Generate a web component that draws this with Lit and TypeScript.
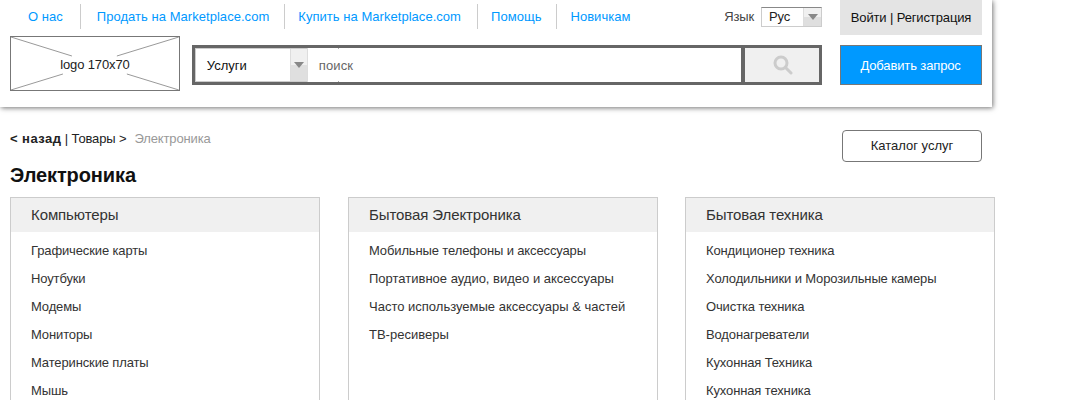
import { LitElement, html, css } from "lit";
import { customElement } from "lit/decorators.js";

const columns = [
  { t: "Компьютеры", items: ["Графические карты", "Ноутбуки", "Модемы", "Мониторы", "Материнские платы", "Мышь"] },
  { t: "Бытовая Электроника", items: ["Мобильные телефоны и аксессуары", "Портативное аудио, видео и аксессуары", "Часто используемые аксессуары & частей", "ТВ-ресиверы"] },
  { t: "Бытовая техника", items: ["Кондиционер техника", "Холодильники и Морозильные камеры", "Очистка техника", "Водонагреватели", "Кухонная Техника", "Кухонная техника"] },
];
const nav = ["О нас", "Продать на Marketplace.com", "Купить на Marketplace.com", "Помощь", "Новичкам"];

@customElement("app-root")
export class AppRoot extends LitElement {
  static styles = css`
    :host { display: block; width: 1072px; height: 400px; overflow: hidden; font-family: "Liberation Sans", Arial, sans-serif; font-size: 13px; letter-spacing: -.13px; color: #222; background: #fff; }
    .header { width: 992px; height: 107px; box-sizing: border-box; box-shadow: 1px 1px 5px rgba(0,0,0,.55); padding: 0 10px; }
    .top { display: flex; height: 35px; }
    .nav { display: flex; align-items: flex-start; padding-top: 4px; flex: 1; }
    .nav a { color: #0099ff; height: 25px; line-height: 25px; padding: 0 13px; border-right: 1px solid #ccc; white-space: nowrap; letter-spacing: .04px; }
    .nav a:first-child { padding: 0 17px 0 18px; }
    .nav a:nth-child(2) { padding: 0 15px 0 16px; }
    .nav a:nth-child(3) { padding: 0 16px 0 13px; }
    .nav a:nth-child(4) { padding: 0 15px 0 13px; }
    .nav a:last-child { border-right: 0; }
    .lang { display: flex; align-items: flex-start; padding-top: 7px; gap: 7px; margin-right: 18px; color: #444; }
    .lang span { line-height: 20px; }
    .sel { display: flex; box-sizing: border-box; width: 61px; height: 20px; border: 1px solid #ccc; border-top-color: #888; color: #222; line-height: 18px; }
    .sel b { font-weight: normal; flex: 1; padding-left: 7px; }
    .arrow { display: flex; align-items: center; justify-content: center; width: 17px; background: linear-gradient(#f0f0f0 50%, #dfdfdf 50%); border-left: 1px solid #ddd; }
    .arrow i { border: 5px solid transparent; border-top: 6px solid #888; border-bottom: 0; }
    .login { width: 142px; height: 35px; line-height: 36px; background: #e4e4e4; text-align: center; color: #111; }
    .row { display: flex; align-items: flex-start; padding-top: 1px; }
    .logo { position: relative; box-sizing: border-box; width: 170px; height: 55px; border: 1px solid #777; display: flex; align-items: center; justify-content: center; padding-top: 1px; }
    .logo svg { position: absolute; inset: 0; width: 100%; height: 100%; }
    .logo span { position: relative; }
    .search { display: flex; box-sizing: border-box; margin: 9px 0 0 12px; width: 631px; height: 40px; border: 3px solid #666; }
    .cat { display: flex; width: 112px; border: 1px solid #ccc; border-right: 0; box-sizing: border-box; color: #111; line-height: 33px; letter-spacing: 0; }
    .cat b { font-weight: normal; flex: 1; padding-left: 11px; }
    .cat .arrow { width: 16px; }
    .input { position: relative; flex: 1; padding-left: 11px; line-height: 36px; color: #666; border-left: 1px solid #ddd; letter-spacing: .1px; }
    .input::before, .input::after { content: ""; position: absolute; left: 30px; width: 1px; height: 1px; background: #aaa; }
    .input::before { top: 0; }
    .input::after { bottom: 0; }
    .go { box-sizing: border-box; width: 78px; background: #f0f0f0; border-left: 4px solid #666; display: flex; align-items: center; justify-content: center; padding-left: 2px; }
    .add { margin: 9px 0 0 18px; width: 142px; height: 40px; box-sizing: border-box; background: #0099ff; border: 1px solid #777; color: #fff; text-align: center; line-height: 39px; padding-right: 1px; }
    .crumbs { display: flex; padding: 23px 10px 0; height: 56px; box-sizing: border-box; align-items: flex-start; }
    .crumbs .path { line-height: 17px; white-space: pre; }
    .crumbs b { letter-spacing: .45px; }
    .crumbs .cur { color: #999; margin-left: 1px; }
    .catalog { margin: 0 80px 0 auto; width: 140px; height: 32px; box-sizing: border-box; border: 1px solid #777; border-radius: 4px; text-align: center; line-height: 30px; letter-spacing: 0; }
    .wrap { padding: 0 10px; }
    h1 { margin: 0; font-size: 20px; line-height: 25px; color: #111; letter-spacing: -.1px; }
    .cols { display: flex; gap: 28px; margin-top: 9px; }
    .col { width: 310px; box-sizing: border-box; border: 1px solid #ccc; height: 300px; }
    .col:nth-child(3) { margin-left: -1px; }
    .col h2 { margin: 0; font-weight: normal; font-size: 15px; letter-spacing: -.1px; background: #f0f0f0; height: 34px; line-height: 34px; padding-left: 20px; color: #333; }
    .col ul { list-style: none; margin: 0; padding: 5px 0 0 20px; }
    .col li { height: 28px; line-height: 28px; color: #333; }
    .col:nth-child(2) li:nth-child(n+2) { letter-spacing: 0; }
  `;

  render() {
    return html`
      <div class="header">
        <div class="top">
          <div class="nav">${nav.map((n) => html`<a>${n}</a>`)}</div>
          <div class="lang"><span>Язык</span><div class="sel"><b>Рус</b><div class="arrow"><i></i></div></div></div>
          <div class="login">Войти | Регистрация</div>
        </div>
        <div class="row">
          <div class="logo">
            <svg viewBox="0 0 168 53"><path d="M0 0L61 19M168 0L106 19M0 53L52 37M168 53L116 37" stroke="#999" stroke-width="1" fill="none"/></svg>
            <span>logo 170x70</span>
          </div>
          <div class="search">
            <div class="cat"><b>Услуги</b><div class="arrow"><i></i></div></div>
            <div class="input">поиск</div>
            <div class="go"><svg width="20" height="20" viewBox="0 0 20 20" fill="none" stroke="#ccc" stroke-width="3"><circle cx="8" cy="8" r="6"/><path d="M12.5 12.5L18 18" stroke-linecap="round"/></svg></div>
          </div>
          <div class="add">Добавить запрос</div>
        </div>
      </div>
      <div class="crumbs">
        <div class="path"><b>&lt; назад</b> | Товары &gt;  <span class="cur">Электроника</span></div>
        <div class="catalog">Каталог услуг</div>
      </div>
      <div class="wrap">
        <h1>Электроника</h1>
        <div class="cols">
          ${columns.map((c) => html`<div class="col"><h2>${c.t}</h2><ul>${c.items.map((i) => html`<li>${i}</li>`)}</ul></div>`)}
        </div>
      </div>
    `;
  }
}
